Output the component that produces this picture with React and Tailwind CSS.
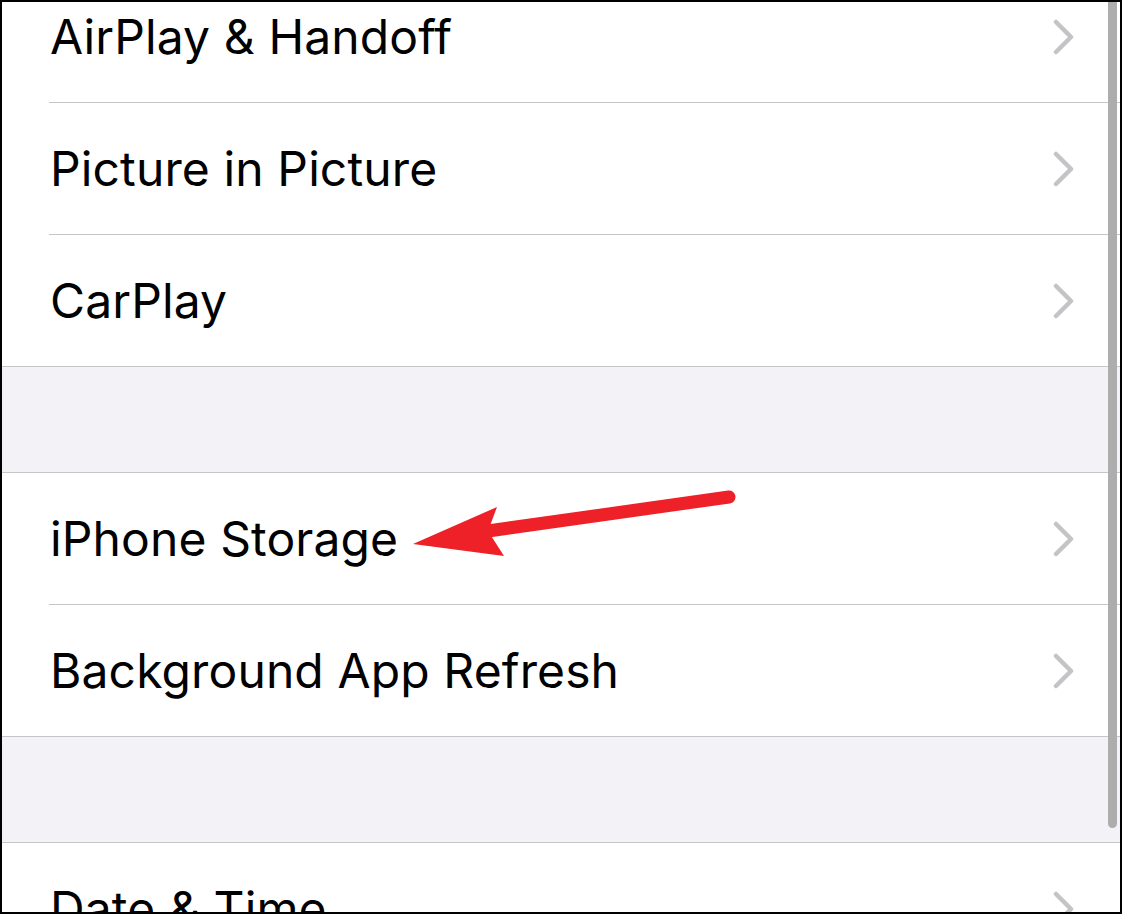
import React from "react";

const Chevron = () => (
  <svg width="24" height="36" viewBox="0 0 24 36" className="shrink-0">
    <path d="M4 3 L19 18 L4 33" fill="none" stroke="#c4c4c7" strokeWidth="4.5" strokeLinecap="round" strokeLinejoin="round" />
  </svg>
);

const Row = ({ label, last }) => (
  <div className="h-[132px] flex flex-col bg-white">
    <div className="flex-1 flex items-center pl-[48px] pr-[44px]">
      <span className="flex-1 text-[48px] text-black leading-none tracking-[0.12px]">{label}</span>
      <Chevron />
    </div>
    {last ? (
      <div className="h-px bg-[#c6c6c8]" />
    ) : (
      <div className="h-px bg-[#c6c6c8] ml-[47px]" />
    )}
  </div>
);

const Spacer = () => (
  <div className="h-[106px] flex flex-col bg-[#f2f2f7]">
    <div className="flex-1" />
    <div className="h-px bg-[#c6c6c8]" />
  </div>
);

export default function App() {
  return (
    <div
      className="relative w-[1122px] h-[914px] border-2 border-black overflow-hidden bg-white"
      style={{ fontFamily: "Inter, 'Noto Sans', sans-serif" }}
    >
      <div className="-mt-[31px] flex flex-col">
        <Row label="AirPlay & Handoff" />
        <Row label="Picture in Picture" />
        <Row label="CarPlay" last />
        <Spacer />
        <Row label="iPhone Storage" />
        <Row label="Background App Refresh" last />
        <Spacer />
        <Row label="Date & Time" />
      </div>
      <div className="absolute left-[1106px] top-0 w-[9px] h-[826px] rounded-b-full bg-[#adadad]" />
      <svg className="absolute left-0 top-0" width="1122" height="914" viewBox="0 0 1122 914">
        <g transform="translate(-2,-2)">
          <line x1="488" y1="531" x2="729" y2="497" stroke="#ee2028" strokeWidth="13" strokeLinecap="round" />
          <polygon points="413,544 497,507 488,531 504,556" fill="#ee2028" />
        </g>
      </svg>
    </div>
  );
}
